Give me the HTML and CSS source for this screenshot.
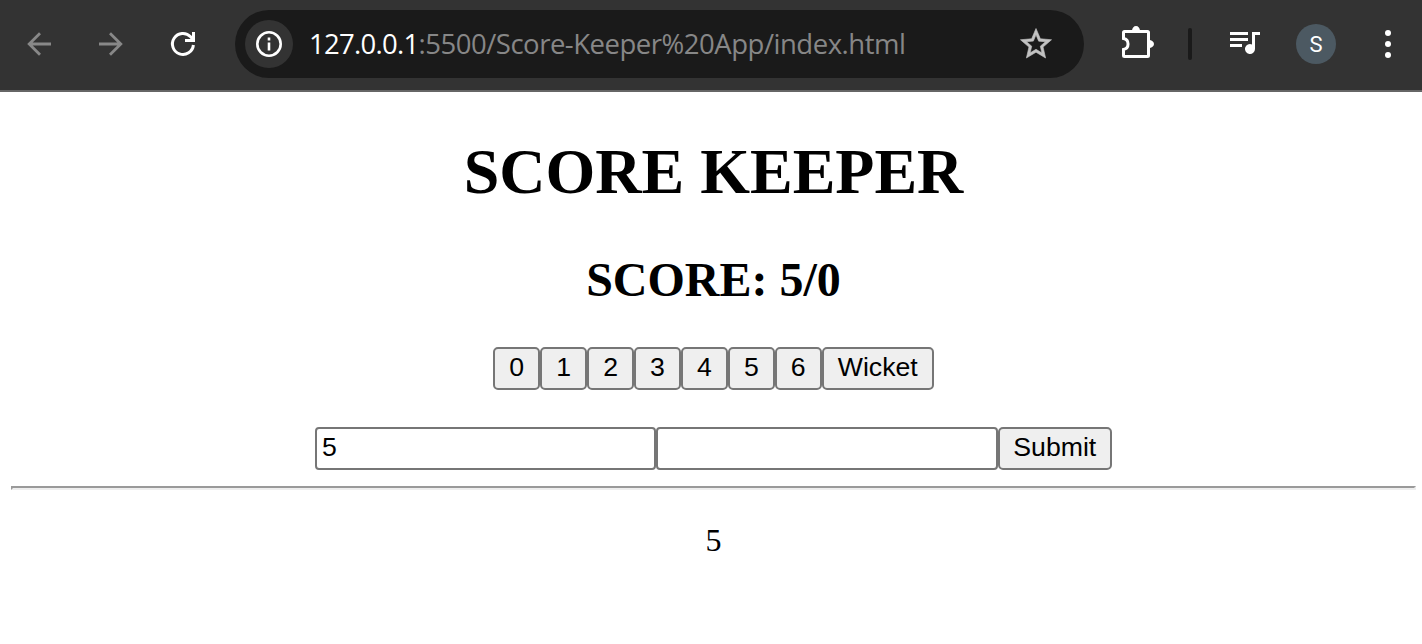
FILE: index.html
```html
<!DOCTYPE html>
<html lang="en">
<head>
<meta charset="utf-8">
<title>Score Keeper</title>
<link rel="stylesheet" href="styles.css">
</head>
<body>
<header class="toolbar">
  <nav class="nav">
    <svg class="icon dim" viewBox="0 0 36 36"><path d="M30 18H8M19 7.2L8.2 18L19 28.8"/></svg>
    <svg class="icon dim" viewBox="0 0 36 36"><path d="M6 18H28M17 7.2L27.8 18L17 28.8"/></svg>
    <svg class="icon reload" viewBox="0 0 36 36"><path d="M28.4 19A10.5 10.5 0 1 1 25.6 10.8L28 13.5M28.5 6V14.5H20"/></svg>
  </nav>
  <div class="address">
    <span class="site-info"><svg viewBox="0 0 26 26"><circle cx="13" cy="13" r="11.7"/><path d="M13 11.5V19.6M13 6.6V9.4"/></svg></span>
    <span class="url"><span class="host">127.0.0.1</span><span class="path">:5500/Score-Keeper%20App/index.html</span></span>
    <svg class="star" viewBox="1.7 1.7 20.6 19.6"><path d="M22 9.24l-7.19-.62L12 2 9.19 8.63 2 9.24l5.46 4.73L5.82 21 12 17.27 18.18 21l-1.63-7.03L22 9.24zM12 15.4l-3.76 2.27 1-4.28-3.32-2.88 4.38-.38L12 6.1l1.71 4.04 4.38.38-3.32 2.88 1 4.28L12 15.4z"/></svg>
  </div>
  <svg class="puzzle" viewBox="0 0 32 32"><path class="line" d="M3.5 5.5H25.5Q26.5 5.5 26.5 6.5V29.5Q26.5 30.5 25.5 30.5H2.5Q1.5 30.5 1.5 29.5V23.5A5.6 5.6 0 0 0 1.5 12.5V6.5Q1.5 5.5 2.5 5.5Z"/><path class="fill" d="M10 5A4 5 0 0 1 18 5ZM27 14A5 4 0 0 1 27 22Z"/></svg>
  <span class="divider"></span>
  <svg class="media" viewBox="0 0 30 23"><path d="M0 1H18V4H0ZM0 7H18V10H0ZM0 13H12V16H0ZM22 1H30V4H25V18A5 5 0 1 1 22 13.4Z"/></svg>
  <span class="avatar">S</span>
  <svg class="menu" viewBox="0 0 6 28"><circle cx="3" cy="3" r="3"/><circle cx="3" cy="14" r="3"/><circle cx="3" cy="25" r="3"/></svg>
</header>
<main class="page">
  <h1>SCORE KEEPER</h1>
  <h2>SCORE: 5/0</h2>
  <div class="row">
    <button class="btn">0</button><button class="btn">1</button><button class="btn">2</button><button class="btn">3</button><button class="btn">4</button><button class="btn">5</button><button class="btn">6</button><button class="btn">Wicket</button>
  </div>
  <form class="row entry">
    <input class="field" value="5"><input class="field"><button class="btn submit" type="button">Submit</button>
  </form>
  <hr class="rule">
  <p class="result">5</p>
</main>
</body>
</html>
```
FILE: styles.css
```css
* { box-sizing: border-box; }
body { margin: 0; height: 644px; overflow: hidden; background: #fff; color: #000; font-family: "Liberation Serif", "Times New Roman", serif; }
svg { display: block; flex: none; }

.toolbar { display: flex; align-items: center; height: 92px; padding: 0 31px 2px 21px; background: #333; border-bottom: 2px solid #666; }
.nav { display: flex; gap: 36px; }
.icon { width: 36px; height: 36px; fill: none; stroke: #fff; stroke-width: 3; }
.dim { stroke: #888; stroke-width: 2.8; }

.address { display: flex; align-items: center; width: 849px; height: 68px; margin-left: 34px; padding: 0 32px 0 10px; border-radius: 34px; background: #1a1a1a; }
.site-info { display: flex; align-items: center; justify-content: center; flex: none; width: 48px; height: 48px; border-radius: 50%; background: #333; }
.site-info svg { width: 26px; height: 26px; fill: none; stroke: #fff; stroke-width: 2.6; }
.url { flex: 1; margin-left: 16px; font: 27.5px/40px "Open Sans", "Noto Sans", sans-serif; white-space: nowrap; }
.host { color: #fff; letter-spacing: -0.73px; }
.path { color: #878787; letter-spacing: -0.48px; }
.star { width: 32px; height: 30.5px; margin-top: -1px; fill: #c2c2c2; stroke: #c2c2c2; stroke-width: 0.4; }

.puzzle { width: 32px; height: 32px; margin: -4px 0 0 38px; }
.puzzle .line { fill: none; stroke: #fff; stroke-width: 3; }
.puzzle .fill { fill: #fff; }
.divider { width: 4px; height: 32px; margin-left: 34px; border-radius: 2px; background: #1a1a1a; }
.media { width: 30px; height: 23px; margin: -3px 0 0 38px; fill: #fff; }
.avatar { width: 40px; height: 40px; margin-left: 36px; border-radius: 50%; background: #4c5962; color: #fff; font: 22px/41px Roboto, sans-serif; text-align: center; }
.menu { width: 6px; height: 28px; margin-left: 49px; fill: #fff; }

.page { padding: 43px 6px 0 11px; text-align: center; }
h1 { margin: 0; font-size: 64px; line-height: 74px; }
h2 { margin: 43px 0 0; font-size: 48px; line-height: 56px; }
.row { display: flex; justify-content: center; margin-top: 39px; }
.entry { margin-top: 37px; }
.btn, .field { height: 43px; margin: 0; border: 2px solid #767676; color: #000; font: 26.667px/30px "Liberation Sans", Arial, sans-serif; }
.btn { padding: 0 14.06px 3px; border-radius: 5px; background: #efefef; }
.submit { padding: 0 13.5px 3px; }
.field { width: 341.3px; padding: 0 5px 2px; border-radius: 4px; background: #fff; }
.submit { width: 114.3px; }
.rule { height: 4px; margin: 16px 0 0; border: 2px inset #eee; }
.result { margin: 32px 0 0; font-size: 32px; line-height: 36px; }
```
